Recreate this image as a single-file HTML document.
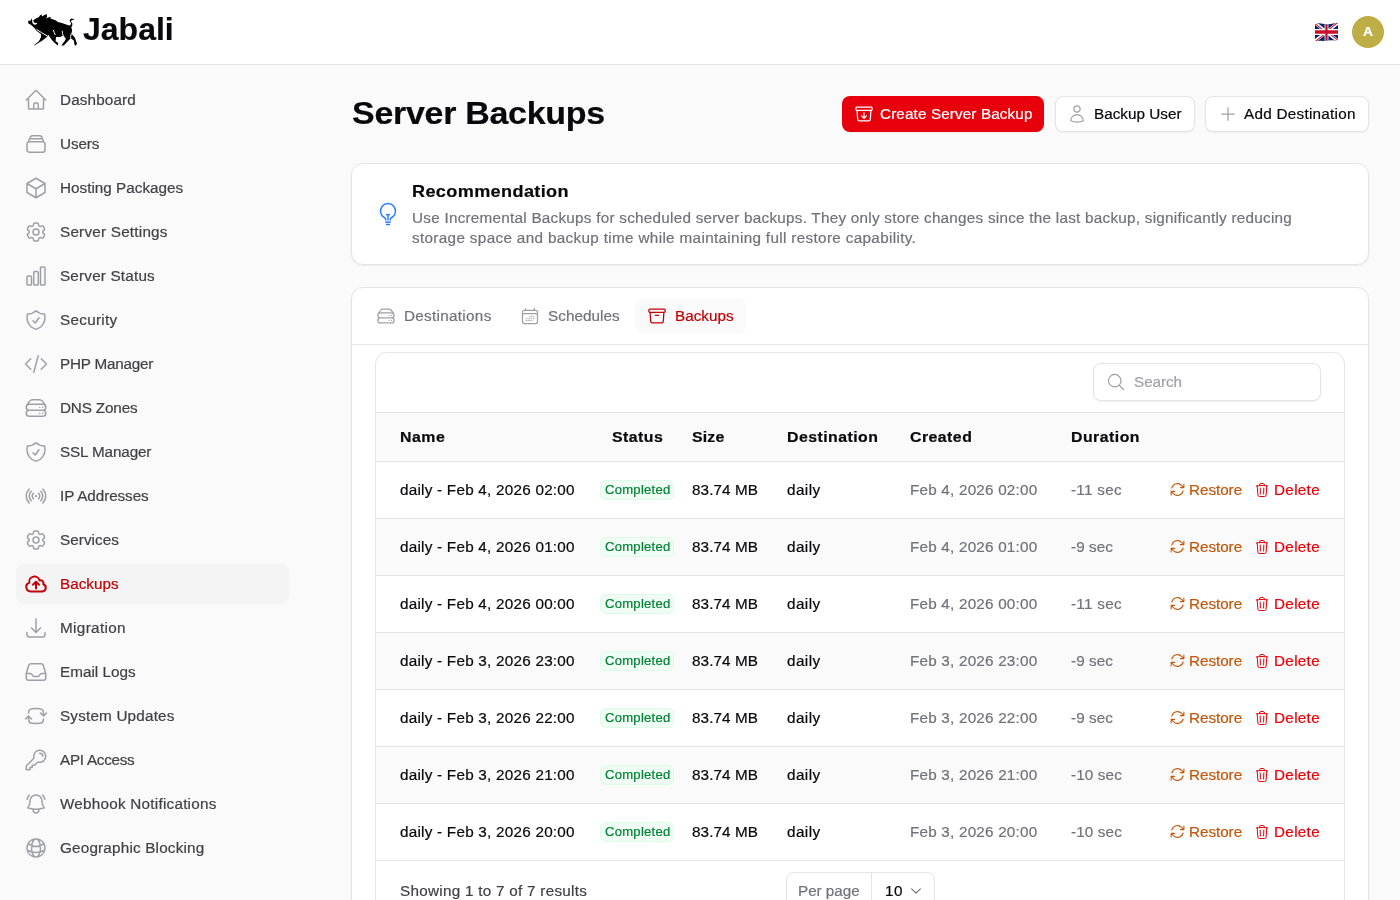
<!DOCTYPE html>
<html><head><meta charset="utf-8"><title>Server Backups</title>
<style>
html,body{margin:0;padding:0;}
body{width:1400px;height:900px;overflow:hidden;position:relative;background:#fafafa;font-family:"Liberation Sans",sans-serif;}
.t{position:absolute;white-space:nowrap;will-change:transform;transform-origin:0 0;}
svg{display:block}
</style></head><body>
<div style="position:absolute;left:0px;top:0px;width:1400px;height:64px;background:#fff;border-bottom:1px solid #e4e4e7"></div>
<svg style="position:absolute;left:24px;top:10px" width="56" height="40" viewBox="0 0 56 40"><path fill="#000" d="M4.1 11 L6.6 10.5 L7 10.3 L7.4 8 L8 10.1 L9.1 10.3 Q10.5 9.2 11.8 8.4 L15.2 6.9 L15.4 6.1 L17.4 4.2 L18.1 6.4 L19.1 5.7 L22.8 4.1 L23 6.9 L21.6 8.8 L24 7.4 L27.2 7.1 L26.2 8.4 L28.7 9.3 L32 10.6 L33.8 12.1 L37.8 13 L44.4 15.2 L45.8 15.6 L47.1 14.1 L46.8 12.6 L45.6 11.2 Q45.6 9 47.3 8.5 L50.8 9.2 L48 10.2 Q46.7 10.5 47 11.4 L48.3 13.4 L48.3 15.6 L47.3 17.3 L48.1 20.4 L47.3 24 L48.6 25 L50.8 27.6 L53 33.8 L51.7 35.7 L50.6 35 L49.8 30.4 L46.8 28.2 L45 29.9 L39.8 35.6 L37.3 35.6 L40.9 30.7 L41.9 28.4 L39.3 25.6 L36 26.9 L32 26.9 L31.6 31.3 L34 32.7 L34.2 34 L33.6 35.6 L28.2 30.4 L25.3 26.2 L24.4 24.7 L22.9 26.9 L18.4 30.4 L11.3 34.9 L9.6 35.6 L14.9 31.3 L17.1 26.9 L16.9 24 L12.4 20.7 L10.9 18.4 L6.9 14.7 L4.4 13.5 Z"/><path fill="#fff" d="M7.9 10.2 Q7.9 13.5 10.2 14.7 Q11.9 14.9 13.3 13.5 L12.3 12.8 Q10.8 13.3 9.9 12.3 Q9.3 11.3 9.4 10.2 Z"/><path fill="none" stroke="#fff" stroke-width="1" stroke-linecap="round" d="M12.8 19.6 Q17.5 22.8 23 25.8 M29.3 20.2 Q30.4 22.5 31.1 24.6 M38.2 21.2 Q38.4 24 39.1 25.4 M47.1 24 Q46.4 26.5 46.6 28"/></svg>
<div class="t" style="left:83px;top:13px;font-size:32.00px;line-height:32px;font-weight:bold;color:#09090b;letter-spacing:0.000px;transform:scaleX(1.0);-webkit-text-stroke:0.2px #09090b;">Jabali</div>
<svg style="position:absolute;left:1314px;top:22px" width="25" height="20" viewBox="0 0 25 20"><defs><clipPath id="fw"><path d="M1,2.2 Q4,1 7,1.4 T13,2.2 T19,1.6 T24,1.2 L24,18 Q21,18.6 19,18.3 T13,18.6 T7,18.8 T1,19 Z"/></clipPath><clipPath id="fc"><path d="M30,15 h30 v15 z v15 h-30 z h-30 v-15 z v-15 h30 z"/></clipPath></defs><g clip-path="url(#fw)"><svg x="1" y="1" width="23" height="18" viewBox="0 0 60 30" preserveAspectRatio="none"><path d="M0,0 v30 h60 v-30 z" fill="#012169"/><path d="M0,0 L60,30 M60,0 L0,30" stroke="#fff" stroke-width="6"/><path d="M0,0 L60,30 M60,0 L0,30" clip-path="url(#fc)" stroke="#C8102E" stroke-width="4"/><path d="M30,0 v30 M0,15 h60" stroke="#fff" stroke-width="10"/><path d="M30,0 v30 M0,15 h60" stroke="#C8102E" stroke-width="6"/></svg></g></svg>
<div style="position:absolute;left:1352px;top:16px;width:32px;height:32px;border-radius:50%;background:#bfad45"></div>
<div class="t" style="left:1363px;top:26px;font-size:12.36px;line-height:12px;font-weight:bold;color:#fff;letter-spacing:0.000px;transform:scaleX(1.12);-webkit-text-stroke:0.2px #fff;">A</div>
<svg style="position:absolute;left:24px;top:88px" width="24" height="24" viewBox="0 0 24 24" fill="none" stroke="#9f9fa9" stroke-width="1.5" stroke-linecap="round" stroke-linejoin="round"><path d="m2.25 12 8.954-8.955c.44-.439 1.152-.439 1.591 0L21.75 12M4.5 9.75v10.125c0 .621.504 1.125 1.125 1.125H9.75v-4.875c0-.621.504-1.125 1.125-1.125h2.25c.621 0 1.125.504 1.125 1.125V21h4.125c.621 0 1.125-.504 1.125-1.125V9.75M8.25 21h8.25"/></svg>
<div class="t" style="left:60px;top:93px;font-size:14.42px;line-height:14px;font-weight:normal;color:#3f3f46;letter-spacing:0.124px;transform:scaleX(1.06);-webkit-text-stroke:0.2px #3f3f46;">Dashboard</div>
<svg style="position:absolute;left:24px;top:132px" width="24" height="24" viewBox="0 0 24 24" fill="none" stroke="#9f9fa9" stroke-width="1.5" stroke-linecap="round" stroke-linejoin="round"><path d="M6 6.878V6a2.25 2.25 0 0 1 2.25-2.25h7.5A2.25 2.25 0 0 1 18 6v.878m-12 0c.235-.083.487-.128.75-.128h10.5c.263 0 .515.045.75.128m-12 0A2.25 2.25 0 0 0 4.5 9v.878m13.5-3A2.25 2.25 0 0 1 19.5 9v.878m0 0a2.246 2.246 0 0 0-.75-.128H5.25c-.263 0-.515.045-.75.128m15 0A2.25 2.25 0 0 1 21 12v6a2.25 2.25 0 0 1-2.25 2.25H5.25A2.25 2.25 0 0 1 3 18v-6c0-.98.626-1.813 1.5-2.122"/></svg>
<div class="t" style="left:60px;top:137px;font-size:14.42px;line-height:14px;font-weight:normal;color:#3f3f46;letter-spacing:-0.134px;transform:scaleX(1.06);-webkit-text-stroke:0.2px #3f3f46;">Users</div>
<svg style="position:absolute;left:24px;top:176px" width="24" height="24" viewBox="0 0 24 24" fill="none" stroke="#9f9fa9" stroke-width="1.5" stroke-linecap="round" stroke-linejoin="round"><path d="m21 7.5-9-5.25L3 7.5m18 0-9 5.25m9-5.25v9l-9 5.25M3 7.5l9 5.25M3 7.5v9l9 5.25m0-9v9"/></svg>
<div class="t" style="left:60px;top:181px;font-size:14.42px;line-height:14px;font-weight:normal;color:#3f3f46;letter-spacing:0.006px;transform:scaleX(1.06);-webkit-text-stroke:0.2px #3f3f46;">Hosting Packages</div>
<svg style="position:absolute;left:24px;top:220px" width="24" height="24" viewBox="0 0 24 24" fill="none" stroke="#9f9fa9" stroke-width="1.5" stroke-linecap="round" stroke-linejoin="round"><path d="M9.594 3.94c.09-.542.56-.94 1.11-.94h2.593c.55 0 1.02.398 1.11.94l.213 1.281c.063.374.313.686.645.87.074.04.147.083.22.127.325.196.72.257 1.075.124l1.217-.456a1.125 1.125 0 0 1 1.37.49l1.296 2.247a1.125 1.125 0 0 1-.26 1.431l-1.003.827c-.293.241-.438.613-.43.992a7.723 7.723 0 0 1 0 .255c-.008.378.137.75.43.991l1.004.827c.424.35.534.955.26 1.43l-1.298 2.247a1.125 1.125 0 0 1-1.369.491l-1.217-.456c-.355-.133-.75-.072-1.076.124a6.47 6.47 0 0 1-.22.128c-.331.183-.581.495-.644.869l-.213 1.281c-.09.543-.56.94-1.11.94h-2.594c-.55 0-1.019-.398-1.11-.94l-.213-1.281c-.062-.374-.312-.686-.644-.87a6.52 6.52 0 0 1-.22-.127c-.325-.196-.72-.257-1.076-.124l-1.217.456a1.125 1.125 0 0 1-1.369-.49l-1.297-2.247a1.125 1.125 0 0 1 .26-1.431l1.004-.827c.292-.24.437-.613.43-.991a6.932 6.932 0 0 1 0-.255c.007-.38-.138-.751-.43-.992l-1.004-.827a1.125 1.125 0 0 1-.26-1.43l1.297-2.247a1.125 1.125 0 0 1 1.37-.491l1.216.456c.356.133.751.072 1.076-.124.072-.044.146-.086.22-.128.332-.183.582-.495.644-.869l.214-1.28ZM15 12a3 3 0 1 1-6 0 3 3 0 0 1 6 0Z"/></svg>
<div class="t" style="left:60px;top:225px;font-size:14.42px;line-height:14px;font-weight:normal;color:#3f3f46;letter-spacing:0.207px;transform:scaleX(1.06);-webkit-text-stroke:0.2px #3f3f46;">Server Settings</div>
<svg style="position:absolute;left:24px;top:264px" width="24" height="24" viewBox="0 0 24 24" fill="none" stroke="#9f9fa9" stroke-width="1.5" stroke-linecap="round" stroke-linejoin="round"><path d="M3 13.125C3 12.504 3.504 12 4.125 12h2.25c.621 0 1.125.504 1.125 1.125v6.75C7.5 20.496 6.996 21 6.375 21h-2.25A1.125 1.125 0 0 1 3 19.875v-6.75ZM9.75 8.625c0-.621.504-1.125 1.125-1.125h2.25c.621 0 1.125.504 1.125 1.125v11.25c0 .621-.504 1.125-1.125 1.125h-2.25a1.125 1.125 0 0 1-1.125-1.125V8.625ZM16.5 4.125c0-.621.504-1.125 1.125-1.125h2.25C20.496 3 21 3.504 21 4.125v15.75c0 .621-.504 1.125-1.125 1.125h-2.25a1.125 1.125 0 0 1-1.125-1.125V4.125Z"/></svg>
<div class="t" style="left:60px;top:269px;font-size:14.42px;line-height:14px;font-weight:normal;color:#3f3f46;letter-spacing:0.173px;transform:scaleX(1.06);-webkit-text-stroke:0.2px #3f3f46;">Server Status</div>
<svg style="position:absolute;left:24px;top:308px" width="24" height="24" viewBox="0 0 24 24" fill="none" stroke="#9f9fa9" stroke-width="1.5" stroke-linecap="round" stroke-linejoin="round"><path d="M9 12.75 11.25 15 15 9.75m-3-7.036A11.959 11.959 0 0 1 3.598 6 11.99 11.99 0 0 0 3 9.749c0 5.592 3.824 10.29 9 11.623 5.176-1.332 9-6.03 9-11.622 0-1.31-.21-2.571-.598-3.751h-.152c-3.196 0-6.1-1.248-8.25-3.285Z"/></svg>
<div class="t" style="left:60px;top:313px;font-size:14.42px;line-height:14px;font-weight:normal;color:#3f3f46;letter-spacing:0.269px;transform:scaleX(1.06);-webkit-text-stroke:0.2px #3f3f46;">Security</div>
<svg style="position:absolute;left:24px;top:352px" width="24" height="24" viewBox="0 0 24 24" fill="none" stroke="#9f9fa9" stroke-width="1.5" stroke-linecap="round" stroke-linejoin="round"><path d="M17.25 6.75 22.5 12l-5.25 5.25m-10.5 0L1.5 12l5.25-5.25m7.5-3-4.5 16.5"/></svg>
<div class="t" style="left:60px;top:357px;font-size:14.42px;line-height:14px;font-weight:normal;color:#3f3f46;letter-spacing:-0.214px;transform:scaleX(1.06);-webkit-text-stroke:0.2px #3f3f46;">PHP Manager</div>
<svg style="position:absolute;left:24px;top:396px" width="24" height="24" viewBox="0 0 24 24" fill="none" stroke="#9f9fa9" stroke-width="1.5" stroke-linecap="round" stroke-linejoin="round"><path d="M5.25 14.25h13.5m-13.5 0a3 3 0 0 1-3-3m3 3a3 3 0 1 0 0 6h13.5a3 3 0 1 0 0-6m-16.5-3a3 3 0 0 1 3-3h13.5a3 3 0 0 1 3 3m-19.5 0a4.5 4.5 0 0 1 .9-2.7L5.737 5.1a3.375 3.375 0 0 1 2.7-1.35h7.126c1.062 0 2.062.5 2.7 1.35l2.587 3.45a4.5 4.5 0 0 1 .9 2.7m0 0a3 3 0 0 1-3 3m0 3h.008v.008h-.008v-.008Zm0-6h.008v.008h-.008v-.008Zm-3 6h.008v.008h-.008v-.008Zm0-6h.008v.008h-.008v-.008Z"/></svg>
<div class="t" style="left:60px;top:401px;font-size:14.42px;line-height:14px;font-weight:normal;color:#3f3f46;letter-spacing:-0.154px;transform:scaleX(1.06);-webkit-text-stroke:0.2px #3f3f46;">DNS Zones</div>
<svg style="position:absolute;left:24px;top:440px" width="24" height="24" viewBox="0 0 24 24" fill="none" stroke="#9f9fa9" stroke-width="1.5" stroke-linecap="round" stroke-linejoin="round"><path d="M9 12.75 11.25 15 15 9.75m-3-7.036A11.959 11.959 0 0 1 3.598 6 11.99 11.99 0 0 0 3 9.749c0 5.592 3.824 10.29 9 11.623 5.176-1.332 9-6.03 9-11.622 0-1.31-.21-2.571-.598-3.751h-.152c-3.196 0-6.1-1.248-8.25-3.285Z"/></svg>
<div class="t" style="left:60px;top:445px;font-size:14.42px;line-height:14px;font-weight:normal;color:#3f3f46;letter-spacing:-0.129px;transform:scaleX(1.06);-webkit-text-stroke:0.2px #3f3f46;">SSL Manager</div>
<svg style="position:absolute;left:24px;top:484px" width="24" height="24" viewBox="0 0 24 24" fill="none" stroke="#9f9fa9" stroke-width="1.5" stroke-linecap="round" stroke-linejoin="round"><path d="M9.348 14.652a3.75 3.75 0 0 1 0-5.304m5.304 0a3.75 3.75 0 0 1 0 5.304m-7.425 2.121a6.75 6.75 0 0 1 0-9.546m9.546 0a6.75 6.75 0 0 1 0 9.546M5.106 18.894c-3.808-3.807-3.808-9.98 0-13.788m13.788 0c3.808 3.807 3.808 9.98 0 13.788M12 12h.008v.008H12V12Zm.375 0a.375.375 0 1 1-.75 0 .375.375 0 0 1 .75 0Z"/></svg>
<div class="t" style="left:60px;top:489px;font-size:14.42px;line-height:14px;font-weight:normal;color:#3f3f46;letter-spacing:-0.086px;transform:scaleX(1.06);-webkit-text-stroke:0.2px #3f3f46;">IP Addresses</div>
<svg style="position:absolute;left:24px;top:528px" width="24" height="24" viewBox="0 0 24 24" fill="none" stroke="#9f9fa9" stroke-width="1.5" stroke-linecap="round" stroke-linejoin="round"><path d="M9.594 3.94c.09-.542.56-.94 1.11-.94h2.593c.55 0 1.02.398 1.11.94l.213 1.281c.063.374.313.686.645.87.074.04.147.083.22.127.325.196.72.257 1.075.124l1.217-.456a1.125 1.125 0 0 1 1.37.49l1.296 2.247a1.125 1.125 0 0 1-.26 1.431l-1.003.827c-.293.241-.438.613-.43.992a7.723 7.723 0 0 1 0 .255c-.008.378.137.75.43.991l1.004.827c.424.35.534.955.26 1.43l-1.298 2.247a1.125 1.125 0 0 1-1.369.491l-1.217-.456c-.355-.133-.75-.072-1.076.124a6.47 6.47 0 0 1-.22.128c-.331.183-.581.495-.644.869l-.213 1.281c-.09.543-.56.94-1.11.94h-2.594c-.55 0-1.019-.398-1.11-.94l-.213-1.281c-.062-.374-.312-.686-.644-.87a6.52 6.52 0 0 1-.22-.127c-.325-.196-.72-.257-1.076-.124l-1.217.456a1.125 1.125 0 0 1-1.369-.49l-1.297-2.247a1.125 1.125 0 0 1 .26-1.431l1.004-.827c.292-.24.437-.613.43-.991a6.932 6.932 0 0 1 0-.255c.007-.38-.138-.751-.43-.992l-1.004-.827a1.125 1.125 0 0 1-.26-1.43l1.297-2.247a1.125 1.125 0 0 1 1.37-.491l1.216.456c.356.133.751.072 1.076-.124.072-.044.146-.086.22-.128.332-.183.582-.495.644-.869l.214-1.28ZM15 12a3 3 0 1 1-6 0 3 3 0 0 1 6 0Z"/></svg>
<div class="t" style="left:60px;top:533px;font-size:14.42px;line-height:14px;font-weight:normal;color:#3f3f46;letter-spacing:0.051px;transform:scaleX(1.06);-webkit-text-stroke:0.2px #3f3f46;">Services</div>
<div style="position:absolute;left:16px;top:564px;width:273px;height:40px;background:#f4f4f5;border-radius:8px"></div>
<svg style="position:absolute;left:24px;top:572px" width="24" height="24" viewBox="0 0 24 24" fill="none" stroke="#c10007" stroke-width="2" stroke-linecap="round" stroke-linejoin="round"><path d="M12 16.5V9.75m0 0 3 3m-3-3-3 3M6.75 19.5a4.5 4.5 0 0 1-1.41-8.775 5.25 5.25 0 0 1 10.233-2.33 3 3 0 0 1 3.758 3.848A3.752 3.752 0 0 1 18 19.5H6.75Z"/></svg>
<div class="t" style="left:60px;top:577px;font-size:14.42px;line-height:14px;font-weight:normal;color:#c10007;letter-spacing:-0.002px;transform:scaleX(1.06);-webkit-text-stroke:0.2px #c10007;">Backups</div>
<svg style="position:absolute;left:24px;top:616px" width="24" height="24" viewBox="0 0 24 24" fill="none" stroke="#9f9fa9" stroke-width="1.5" stroke-linecap="round" stroke-linejoin="round"><path d="M3 16.5v2.25A2.25 2.25 0 0 0 5.25 21h13.5A2.25 2.25 0 0 0 21 18.75V16.5M16.5 12 12 16.5m0 0L7.5 12m4.5 4.5V3"/></svg>
<div class="t" style="left:60px;top:621px;font-size:14.42px;line-height:14px;font-weight:normal;color:#3f3f46;letter-spacing:0.330px;transform:scaleX(1.06);-webkit-text-stroke:0.2px #3f3f46;">Migration</div>
<svg style="position:absolute;left:24px;top:660px" width="24" height="24" viewBox="0 0 24 24" fill="none" stroke="#9f9fa9" stroke-width="1.5" stroke-linecap="round" stroke-linejoin="round"><path d="M2.25 13.5h3.86a2.25 2.25 0 0 1 2.012 1.244l.256.512a2.25 2.25 0 0 0 2.013 1.244h3.218a2.25 2.25 0 0 0 2.013-1.244l.256-.512a2.25 2.25 0 0 1 2.013-1.244h3.859m-19.5.338V18a2.25 2.25 0 0 0 2.25 2.25h15A2.25 2.25 0 0 0 21.75 18v-4.162c0-.224-.034-.447-.1-.661L19.24 5.338a2.25 2.25 0 0 0-2.15-1.588H6.911a2.25 2.25 0 0 0-2.15 1.588L2.35 13.177a2.25 2.25 0 0 0-.1.661Z"/></svg>
<div class="t" style="left:60px;top:665px;font-size:14.42px;line-height:14px;font-weight:normal;color:#3f3f46;letter-spacing:-0.001px;transform:scaleX(1.06);-webkit-text-stroke:0.2px #3f3f46;">Email Logs</div>
<svg style="position:absolute;left:24px;top:704px" width="24" height="24" viewBox="0 0 24 24" fill="none" stroke="#9f9fa9" stroke-width="1.5" stroke-linecap="round" stroke-linejoin="round"><path d="M19.5 12c0-1.232-.046-2.453-.138-3.662a4.006 4.006 0 0 0-3.7-3.7 48.678 48.678 0 0 0-7.324 0 4.006 4.006 0 0 0-3.7 3.7c-.017.22-.032.441-.046.662M19.5 12l3-3m-3 3-3-3m-12 3c0 1.232.046 2.453.138 3.662a4.006 4.006 0 0 0 3.7 3.7 48.656 48.656 0 0 0 7.324 0 4.006 4.006 0 0 0 3.7-3.7c.017-.22.032-.441.046-.662M4.5 12l3 3m-3-3-3 3"/></svg>
<div class="t" style="left:60px;top:709px;font-size:14.42px;line-height:14px;font-weight:normal;color:#3f3f46;letter-spacing:0.170px;transform:scaleX(1.06);-webkit-text-stroke:0.2px #3f3f46;">System Updates</div>
<svg style="position:absolute;left:24px;top:748px" width="24" height="24" viewBox="0 0 24 24" fill="none" stroke="#9f9fa9" stroke-width="1.5" stroke-linecap="round" stroke-linejoin="round"><path d="M15.75 5.25a3 3 0 0 1 3 3m3 0a6 6 0 0 1-7.029 5.912c-.563-.097-1.159.026-1.563.43L10.5 17.25H8.25v2.25H6v2.25H2.25v-2.818c0-.597.237-1.17.659-1.591l6.499-6.499c.404-.404.527-1 .43-1.563A6 6 0 1 1 21.75 8.25Z"/></svg>
<div class="t" style="left:60px;top:753px;font-size:14.42px;line-height:14px;font-weight:normal;color:#3f3f46;letter-spacing:-0.262px;transform:scaleX(1.06);-webkit-text-stroke:0.2px #3f3f46;">API Access</div>
<svg style="position:absolute;left:24px;top:792px" width="24" height="24" viewBox="0 0 24 24" fill="none" stroke="#9f9fa9" stroke-width="1.5" stroke-linecap="round" stroke-linejoin="round"><path d="M14.857 17.082a23.848 23.848 0 0 0 5.454-1.31A8.967 8.967 0 0 1 18 9.75V9A6 6 0 0 0 6 9v.75a8.967 8.967 0 0 1-2.312 6.022c1.733.64 3.56 1.085 5.455 1.31m5.714 0a24.255 24.255 0 0 1-5.714 0m5.714 0a3 3 0 1 1-5.714 0M3.124 7.5A8.969 8.969 0 0 1 5.292 3m13.416 0a8.969 8.969 0 0 1 2.168 4.5"/></svg>
<div class="t" style="left:60px;top:797px;font-size:14.42px;line-height:14px;font-weight:normal;color:#3f3f46;letter-spacing:0.221px;transform:scaleX(1.06);-webkit-text-stroke:0.2px #3f3f46;">Webhook Notifications</div>
<svg style="position:absolute;left:24px;top:836px" width="24" height="24" viewBox="0 0 24 24" fill="none" stroke="#9f9fa9" stroke-width="1.5" stroke-linecap="round" stroke-linejoin="round"><path d="M12 21a9.004 9.004 0 0 0 8.716-6.747M12 21a9.004 9.004 0 0 1-8.716-6.747M12 21c2.485 0 4.5-4.03 4.5-9S14.485 3 12 3m0 18c-2.485 0-4.5-4.03-4.5-9S9.515 3 12 3m0 0a8.997 8.997 0 0 1 7.843 4.582M12 3a8.997 8.997 0 0 0-7.843 4.582m15.686 0A11.953 11.953 0 0 1 12 10.5c-2.998 0-5.740-1.1-7.843-2.918m15.686 0A8.959 8.959 0 0 1 21 12c0 .778-.099 1.533-.284 2.253m0 0A17.919 17.919 0 0 1 12 16.5c-3.162 0-6.133-.815-8.716-2.247m0 0A9.015 9.015 0 0 1 3 12c0-1.605.42-3.113 1.157-4.418"/></svg>
<div class="t" style="left:60px;top:841px;font-size:14.42px;line-height:14px;font-weight:normal;color:#3f3f46;letter-spacing:0.175px;transform:scaleX(1.06);-webkit-text-stroke:0.2px #3f3f46;">Geographic Blocking</div>
<div class="t" style="left:352px;top:99px;font-size:30.90px;line-height:30px;font-weight:bold;color:#09090b;letter-spacing:-0.262px;transform:scaleX(1.1);-webkit-text-stroke:0.2px #09090b;">Server Backups</div>
<div style="position:absolute;left:842px;top:96px;width:202px;height:36px;background:#e7000b;border-radius:8px;box-shadow:0 1px 2px rgba(0,0,0,.05)"></div>
<svg style="position:absolute;left:854px;top:104px" width="20" height="20" viewBox="0 0 24 24" fill="none" stroke="#fff" stroke-width="1.5" stroke-linecap="round" stroke-linejoin="round"><path d="m20.25 7.5-.625 10.632a2.25 2.25 0 0 1-2.247 2.118H6.622a2.25 2.25 0 0 1-2.247-2.118L3.75 7.5m8.25 3v6.75m0 0-3-3m3 3 3-3M3.375 7.5h17.25c.621 0 1.125-.504 1.125-1.125v-1.5c0-.621-.504-1.125-1.125-1.125H3.375c-.621 0-1.125.504-1.125 1.125v1.5c0 .621.504 1.125 1.125 1.125Z"/></svg>
<div class="t" style="left:880px;top:107px;font-size:14.42px;line-height:14px;font-weight:normal;color:#fff;letter-spacing:0.108px;transform:scaleX(1.06);-webkit-text-stroke:0.2px #fff;">Create Server Backup</div>
<div style="position:absolute;left:1055px;top:96px;width:140px;height:36px;box-sizing:border-box;background:#fff;border:1px solid #e4e4e7;border-radius:8px;box-shadow:0 1px 2px rgba(0,0,0,.05)"></div>
<svg style="position:absolute;left:1067px;top:104px" width="20" height="20" viewBox="0 0 24 24" fill="none" stroke="#9f9fa9" stroke-width="1.5" stroke-linecap="round" stroke-linejoin="round"><path d="M15.75 6a3.75 3.75 0 1 1-7.5 0 3.75 3.75 0 0 1 7.5 0ZM4.501 20.118a7.5 7.5 0 0 1 14.998 0A17.933 17.933 0 0 1 12 21.75c-2.676 0-5.216-.584-7.499-1.632Z"/></svg>
<div class="t" style="left:1094px;top:107px;font-size:14.42px;line-height:14px;font-weight:normal;color:#09090b;letter-spacing:0.015px;transform:scaleX(1.06);-webkit-text-stroke:0.2px #09090b;">Backup User</div>
<div style="position:absolute;left:1205px;top:96px;width:164px;height:36px;box-sizing:border-box;background:#fff;border:1px solid #e4e4e7;border-radius:8px;box-shadow:0 1px 2px rgba(0,0,0,.05)"></div>
<svg style="position:absolute;left:1218px;top:104px" width="20" height="20" viewBox="0 0 24 24" fill="none" stroke="#9f9fa9" stroke-width="1.5" stroke-linecap="round" stroke-linejoin="round"><path d="M12 4.5v15m7.5-7.5h-15"/></svg>
<div class="t" style="left:1244px;top:107px;font-size:14.42px;line-height:14px;font-weight:normal;color:#09090b;letter-spacing:0.250px;transform:scaleX(1.06);-webkit-text-stroke:0.2px #09090b;">Add Destination</div>
<div style="position:absolute;left:351px;top:163px;width:1018px;height:102px;box-sizing:border-box;background:#fff;border:1px solid #e4e4e7;border-radius:12px;box-shadow:0 1px 2px rgba(0,0,0,.06)"></div>
<svg style="position:absolute;left:376px;top:202px" width="24" height="24" viewBox="0 0 24 24" fill="none" stroke="#2b7fff" stroke-width="1.5" stroke-linecap="round" stroke-linejoin="round"><path d="M12 18v-5.25m0 0a6.01 6.01 0 0 0 1.5-.189m-1.5.189a6.01 6.01 0 0 1-1.5-.189m3.75 7.478a12.06 12.06 0 0 1-4.5 0m3.75 2.383a14.406 14.406 0 0 1-3 0M14.250 18v-.192c0-.983.658-1.823 1.508-2.316a7.5 7.5 0 1 0-7.517 0c.85.493 1.509 1.333 1.509 2.316V18"/></svg>
<div class="t" style="left:412px;top:183px;font-size:16.48px;line-height:16px;font-weight:bold;color:#09090b;letter-spacing:0.319px;transform:scaleX(1.1);-webkit-text-stroke:0.2px #09090b;">Recommendation</div>
<div class="t" style="left:412px;top:211px;font-size:14.42px;line-height:14px;font-weight:normal;color:#71717b;letter-spacing:0.235px;transform:scaleX(1.06);-webkit-text-stroke:0.2px #71717b;">Use Incremental Backups for scheduled server backups. They only store changes since the last backup, significantly reducing</div>
<div class="t" style="left:412px;top:231px;font-size:14.42px;line-height:14px;font-weight:normal;color:#71717b;letter-spacing:0.315px;transform:scaleX(1.06);-webkit-text-stroke:0.2px #71717b;">storage space and backup time while maintaining full restore capability.</div>
<div style="position:absolute;left:351px;top:287px;width:1018px;height:700px;box-sizing:border-box;background:#fff;border:1px solid #e4e4e7;border-radius:12px;box-shadow:0 1px 2px rgba(0,0,0,.06)"></div>
<div style="position:absolute;left:352px;top:344px;width:1016px;height:1px;background:#e4e4e7"></div>
<svg style="position:absolute;left:376px;top:306px" width="20" height="20" viewBox="0 0 24 24" fill="none" stroke="#9f9fa9" stroke-width="1.5" stroke-linecap="round" stroke-linejoin="round"><path d="M5.25 14.25h13.5m-13.5 0a3 3 0 0 1-3-3m3 3a3 3 0 1 0 0 6h13.5a3 3 0 1 0 0-6m-16.5-3a3 3 0 0 1 3-3h13.5a3 3 0 0 1 3 3m-19.5 0a4.5 4.5 0 0 1 .9-2.7L5.737 5.1a3.375 3.375 0 0 1 2.7-1.35h7.126c1.062 0 2.062.5 2.7 1.35l2.587 3.45a4.5 4.5 0 0 1 .9 2.7m0 0a3 3 0 0 1-3 3m0 3h.008v.008h-.008v-.008Zm0-6h.008v.008h-.008v-.008Zm-3 6h.008v.008h-.008v-.008Zm0-6h.008v.008h-.008v-.008Z"/></svg>
<div class="t" style="left:404px;top:309px;font-size:14.42px;line-height:14px;font-weight:normal;color:#71717b;letter-spacing:0.277px;transform:scaleX(1.06);-webkit-text-stroke:0.2px #71717b;">Destinations</div>
<svg style="position:absolute;left:520px;top:306px" width="20" height="20" viewBox="0 0 24 24" fill="none" stroke="#9f9fa9" stroke-width="1.5" stroke-linecap="round" stroke-linejoin="round"><path d="M6.75 3v2.25M17.25 3v2.25M3 18.75V7.5a2.25 2.25 0 0 1 2.25-2.25h13.5A2.25 2.25 0 0 1 21 7.5v11.25m-18 0A2.25 2.25 0 0 0 5.25 21h13.5A2.25 2.25 0 0 0 21 18.75m-18 0v-7.5A2.25 2.25 0 0 1 5.25 9h13.5A2.25 2.25 0 0 1 21 11.25v7.5m-9-6h.008v.008H12v-.008ZM12 15h.008v.008H12V15Zm0 2.25h.008v.008H12v-.008ZM9.75 15h.008v.008H9.75V15Zm0 2.25h.008v.008H9.75v-.008ZM7.5 15h.008v.008H7.5V15Zm0 2.25h.008v.008H7.5v-.008Zm6.75-4.5h.008v.008h-.008v-.008Zm0 2.25h.008v.008h-.008V15Zm0 2.25h.008v.008h-.008v-.008Zm2.25-4.5h.008v.008H16.5v-.008Zm0 2.25h.008v.008H16.5V15Z"/></svg>
<div class="t" style="left:548px;top:309px;font-size:14.42px;line-height:14px;font-weight:normal;color:#71717b;letter-spacing:0.026px;transform:scaleX(1.06);-webkit-text-stroke:0.2px #71717b;">Schedules</div>
<div style="position:absolute;left:635px;top:298px;width:111px;height:36px;background:#fafafa;border-radius:8px"></div>
<svg style="position:absolute;left:647px;top:306px" width="20" height="20" viewBox="0 0 24 24" fill="none" stroke="#c10007" stroke-width="1.5" stroke-linecap="round" stroke-linejoin="round"><path d="m20.25 7.5-.625 10.632a2.25 2.25 0 0 1-2.247 2.118H6.622a2.25 2.25 0 0 1-2.247-2.118L3.75 7.5M10 11.25h4M3.375 7.5h17.25c.621 0 1.125-.504 1.125-1.125v-1.5c0-.621-.504-1.125-1.125-1.125H3.375c-.621 0-1.125.504-1.125 1.125v1.5c0 .621.504 1.125 1.125 1.125Z"/></svg>
<div class="t" style="left:675px;top:309px;font-size:14.42px;line-height:14px;font-weight:normal;color:#c10007;letter-spacing:-0.002px;transform:scaleX(1.06);-webkit-text-stroke:0.2px #c10007;">Backups</div>
<div style="position:absolute;left:375px;top:352px;width:970px;height:700px;box-sizing:border-box;background:#fff;border:1px solid #e4e4e7;border-radius:12px"></div>
<div style="position:absolute;left:1093px;top:363px;width:228px;height:38px;box-sizing:border-box;background:#fff;border:1px solid #e4e4e7;border-radius:8px;box-shadow:0 1px 2px rgba(0,0,0,.05)"></div>
<svg style="position:absolute;left:1106px;top:372px" width="20" height="20" viewBox="0 0 24 24" fill="none" stroke="#9f9fa9" stroke-width="1.5" stroke-linecap="round" stroke-linejoin="round"><path d="m21 21-5.197-5.197m0 0A7.5 7.5 0 1 0 5.196 5.196a7.5 7.5 0 0 0 10.607 10.607Z"/></svg>
<div class="t" style="left:1134px;top:375px;font-size:14.42px;line-height:14px;font-weight:normal;color:#9f9fa9;letter-spacing:-0.052px;transform:scaleX(1.06);-webkit-text-stroke:0.2px #9f9fa9;">Search</div>
<div style="position:absolute;left:376px;top:412px;width:968px;height:50px;box-sizing:border-box;background:#fafafa;border-top:1px solid #e4e4e7;border-bottom:1px solid #e4e4e7"></div>
<div class="t" style="left:400px;top:430px;font-size:14.42px;line-height:14px;font-weight:bold;color:#09090b;letter-spacing:0.465px;transform:scaleX(1.1);-webkit-text-stroke:0.2px #09090b;">Name</div>
<div class="t" style="left:612px;top:430px;font-size:14.42px;line-height:14px;font-weight:bold;color:#09090b;letter-spacing:0.415px;transform:scaleX(1.1);-webkit-text-stroke:0.2px #09090b;">Status</div>
<div class="t" style="left:692px;top:430px;font-size:14.42px;line-height:14px;font-weight:bold;color:#09090b;letter-spacing:0.179px;transform:scaleX(1.1);-webkit-text-stroke:0.2px #09090b;">Size</div>
<div class="t" style="left:787px;top:430px;font-size:14.42px;line-height:14px;font-weight:bold;color:#09090b;letter-spacing:0.419px;transform:scaleX(1.1);-webkit-text-stroke:0.2px #09090b;">Destination</div>
<div class="t" style="left:910px;top:430px;font-size:14.42px;line-height:14px;font-weight:bold;color:#09090b;letter-spacing:0.425px;transform:scaleX(1.1);-webkit-text-stroke:0.2px #09090b;">Created</div>
<div class="t" style="left:1071px;top:430px;font-size:14.42px;line-height:14px;font-weight:bold;color:#09090b;letter-spacing:0.433px;transform:scaleX(1.1);-webkit-text-stroke:0.2px #09090b;">Duration</div>
<div style="position:absolute;left:376px;top:462px;width:968px;height:57px;box-sizing:border-box;background:#fff;border-bottom:1px solid #e4e4e7"></div>
<div class="t" style="left:400px;top:483px;font-size:14.42px;line-height:14px;font-weight:normal;color:#09090b;letter-spacing:0.221px;transform:scaleX(1.06);-webkit-text-stroke:0.2px #09090b;">daily - Feb 4, 2026 02:00</div>
<div style="position:absolute;left:600px;top:480px;width:74px;height:20px;box-sizing:border-box;background:#f0fdf4;border:1px solid #dcfce7;border-radius:6px"></div>
<div class="t" style="left:605px;top:484px;font-size:12.36px;line-height:12px;font-weight:normal;color:#008236;letter-spacing:0.220px;transform:scaleX(1.06);-webkit-text-stroke:0.2px #008236;">Completed</div>
<div class="t" style="left:692px;top:483px;font-size:14.42px;line-height:14px;font-weight:normal;color:#09090b;letter-spacing:0.093px;transform:scaleX(1.06);-webkit-text-stroke:0.2px #09090b;">83.74 MB</div>
<div class="t" style="left:787px;top:483px;font-size:14.42px;line-height:14px;font-weight:normal;color:#09090b;letter-spacing:0.396px;transform:scaleX(1.06);-webkit-text-stroke:0.2px #09090b;">daily</div>
<div class="t" style="left:910px;top:483px;font-size:14.42px;line-height:14px;font-weight:normal;color:#71717b;letter-spacing:0.189px;transform:scaleX(1.06);-webkit-text-stroke:0.2px #71717b;">Feb 4, 2026 02:00</div>
<div class="t" style="left:1071px;top:483px;font-size:14.42px;line-height:14px;font-weight:normal;color:#71717b;letter-spacing:0.261px;transform:scaleX(1.06);-webkit-text-stroke:0.2px #71717b;">-11 sec</div>
<svg style="position:absolute;left:1168.5px;top:481px" width="17" height="17" viewBox="0 0 24 24" fill="none" stroke="#c2570c" stroke-width="1.5" stroke-linecap="round" stroke-linejoin="round"><path d="M16.023 9.348h4.992v-.001M2.985 19.644v-4.992m0 0h4.992m-4.993 0 3.181 3.183a8.25 8.25 0 0 0 13.803-3.7M4.031 9.865a8.25 8.25 0 0 1 13.803-3.7l3.181 3.182m0-4.991v4.99"/></svg>
<div class="t" style="left:1189px;top:483px;font-size:14.42px;line-height:14px;font-weight:normal;color:#c2570c;letter-spacing:-0.053px;transform:scaleX(1.06);-webkit-text-stroke:0.2px #c2570c;">Restore</div>
<svg style="position:absolute;left:1253.5px;top:482px" width="16" height="16" viewBox="0 0 24 24" fill="none" stroke="#e7000b" stroke-width="1.5" stroke-linecap="round" stroke-linejoin="round"><path d="m14.74 9-.346 9m-4.788 0L9.26 9m9.968-3.21c.342.052.682.107 1.022.166m-1.022-.165L18.16 19.673a2.25 2.25 0 0 1-2.244 2.077H8.084a2.25 2.25 0 0 1-2.244-2.077L4.772 5.79m14.456 0a48.108 48.108 0 0 0-3.478-.397m-12 .562c.34-.059.68-.114 1.022-.165m0 0a48.11 48.11 0 0 1 3.478-.397m7.5 0v-.916c0-1.18-.91-2.164-2.09-2.201a51.964 51.964 0 0 0-3.32 0c-1.18.037-2.09 1.022-2.09 2.201v.916m7.5 0a48.667 48.667 0 0 0-7.5 0"/></svg>
<div class="t" style="left:1274px;top:483px;font-size:14.42px;line-height:14px;font-weight:normal;color:#e7000b;letter-spacing:0.286px;transform:scaleX(1.06);-webkit-text-stroke:0.2px #e7000b;">Delete</div>
<div style="position:absolute;left:376px;top:519px;width:968px;height:57px;box-sizing:border-box;background:#fafafa;border-bottom:1px solid #e4e4e7"></div>
<div class="t" style="left:400px;top:540px;font-size:14.42px;line-height:14px;font-weight:normal;color:#09090b;letter-spacing:0.221px;transform:scaleX(1.06);-webkit-text-stroke:0.2px #09090b;">daily - Feb 4, 2026 01:00</div>
<div style="position:absolute;left:600px;top:537px;width:74px;height:20px;box-sizing:border-box;background:#f0fdf4;border:1px solid #dcfce7;border-radius:6px"></div>
<div class="t" style="left:605px;top:541px;font-size:12.36px;line-height:12px;font-weight:normal;color:#008236;letter-spacing:0.220px;transform:scaleX(1.06);-webkit-text-stroke:0.2px #008236;">Completed</div>
<div class="t" style="left:692px;top:540px;font-size:14.42px;line-height:14px;font-weight:normal;color:#09090b;letter-spacing:0.093px;transform:scaleX(1.06);-webkit-text-stroke:0.2px #09090b;">83.74 MB</div>
<div class="t" style="left:787px;top:540px;font-size:14.42px;line-height:14px;font-weight:normal;color:#09090b;letter-spacing:0.396px;transform:scaleX(1.06);-webkit-text-stroke:0.2px #09090b;">daily</div>
<div class="t" style="left:910px;top:540px;font-size:14.42px;line-height:14px;font-weight:normal;color:#71717b;letter-spacing:0.189px;transform:scaleX(1.06);-webkit-text-stroke:0.2px #71717b;">Feb 4, 2026 01:00</div>
<div class="t" style="left:1071px;top:540px;font-size:14.42px;line-height:14px;font-weight:normal;color:#71717b;letter-spacing:0.062px;transform:scaleX(1.06);-webkit-text-stroke:0.2px #71717b;">-9 sec</div>
<svg style="position:absolute;left:1168.5px;top:538px" width="17" height="17" viewBox="0 0 24 24" fill="none" stroke="#c2570c" stroke-width="1.5" stroke-linecap="round" stroke-linejoin="round"><path d="M16.023 9.348h4.992v-.001M2.985 19.644v-4.992m0 0h4.992m-4.993 0 3.181 3.183a8.25 8.25 0 0 0 13.803-3.7M4.031 9.865a8.25 8.25 0 0 1 13.803-3.7l3.181 3.182m0-4.991v4.99"/></svg>
<div class="t" style="left:1189px;top:540px;font-size:14.42px;line-height:14px;font-weight:normal;color:#c2570c;letter-spacing:-0.053px;transform:scaleX(1.06);-webkit-text-stroke:0.2px #c2570c;">Restore</div>
<svg style="position:absolute;left:1253.5px;top:539px" width="16" height="16" viewBox="0 0 24 24" fill="none" stroke="#e7000b" stroke-width="1.5" stroke-linecap="round" stroke-linejoin="round"><path d="m14.74 9-.346 9m-4.788 0L9.26 9m9.968-3.21c.342.052.682.107 1.022.166m-1.022-.165L18.16 19.673a2.25 2.25 0 0 1-2.244 2.077H8.084a2.25 2.25 0 0 1-2.244-2.077L4.772 5.79m14.456 0a48.108 48.108 0 0 0-3.478-.397m-12 .562c.34-.059.68-.114 1.022-.165m0 0a48.11 48.11 0 0 1 3.478-.397m7.5 0v-.916c0-1.18-.91-2.164-2.09-2.201a51.964 51.964 0 0 0-3.32 0c-1.18.037-2.09 1.022-2.09 2.201v.916m7.5 0a48.667 48.667 0 0 0-7.5 0"/></svg>
<div class="t" style="left:1274px;top:540px;font-size:14.42px;line-height:14px;font-weight:normal;color:#e7000b;letter-spacing:0.286px;transform:scaleX(1.06);-webkit-text-stroke:0.2px #e7000b;">Delete</div>
<div style="position:absolute;left:376px;top:576px;width:968px;height:57px;box-sizing:border-box;background:#fff;border-bottom:1px solid #e4e4e7"></div>
<div class="t" style="left:400px;top:597px;font-size:14.42px;line-height:14px;font-weight:normal;color:#09090b;letter-spacing:0.221px;transform:scaleX(1.06);-webkit-text-stroke:0.2px #09090b;">daily - Feb 4, 2026 00:00</div>
<div style="position:absolute;left:600px;top:594px;width:74px;height:20px;box-sizing:border-box;background:#f0fdf4;border:1px solid #dcfce7;border-radius:6px"></div>
<div class="t" style="left:605px;top:598px;font-size:12.36px;line-height:12px;font-weight:normal;color:#008236;letter-spacing:0.220px;transform:scaleX(1.06);-webkit-text-stroke:0.2px #008236;">Completed</div>
<div class="t" style="left:692px;top:597px;font-size:14.42px;line-height:14px;font-weight:normal;color:#09090b;letter-spacing:0.093px;transform:scaleX(1.06);-webkit-text-stroke:0.2px #09090b;">83.74 MB</div>
<div class="t" style="left:787px;top:597px;font-size:14.42px;line-height:14px;font-weight:normal;color:#09090b;letter-spacing:0.396px;transform:scaleX(1.06);-webkit-text-stroke:0.2px #09090b;">daily</div>
<div class="t" style="left:910px;top:597px;font-size:14.42px;line-height:14px;font-weight:normal;color:#71717b;letter-spacing:0.189px;transform:scaleX(1.06);-webkit-text-stroke:0.2px #71717b;">Feb 4, 2026 00:00</div>
<div class="t" style="left:1071px;top:597px;font-size:14.42px;line-height:14px;font-weight:normal;color:#71717b;letter-spacing:0.261px;transform:scaleX(1.06);-webkit-text-stroke:0.2px #71717b;">-11 sec</div>
<svg style="position:absolute;left:1168.5px;top:595px" width="17" height="17" viewBox="0 0 24 24" fill="none" stroke="#c2570c" stroke-width="1.5" stroke-linecap="round" stroke-linejoin="round"><path d="M16.023 9.348h4.992v-.001M2.985 19.644v-4.992m0 0h4.992m-4.993 0 3.181 3.183a8.25 8.25 0 0 0 13.803-3.7M4.031 9.865a8.25 8.25 0 0 1 13.803-3.7l3.181 3.182m0-4.991v4.99"/></svg>
<div class="t" style="left:1189px;top:597px;font-size:14.42px;line-height:14px;font-weight:normal;color:#c2570c;letter-spacing:-0.053px;transform:scaleX(1.06);-webkit-text-stroke:0.2px #c2570c;">Restore</div>
<svg style="position:absolute;left:1253.5px;top:596px" width="16" height="16" viewBox="0 0 24 24" fill="none" stroke="#e7000b" stroke-width="1.5" stroke-linecap="round" stroke-linejoin="round"><path d="m14.74 9-.346 9m-4.788 0L9.26 9m9.968-3.21c.342.052.682.107 1.022.166m-1.022-.165L18.16 19.673a2.25 2.25 0 0 1-2.244 2.077H8.084a2.25 2.25 0 0 1-2.244-2.077L4.772 5.79m14.456 0a48.108 48.108 0 0 0-3.478-.397m-12 .562c.34-.059.68-.114 1.022-.165m0 0a48.11 48.11 0 0 1 3.478-.397m7.5 0v-.916c0-1.18-.91-2.164-2.09-2.201a51.964 51.964 0 0 0-3.32 0c-1.18.037-2.09 1.022-2.09 2.201v.916m7.5 0a48.667 48.667 0 0 0-7.5 0"/></svg>
<div class="t" style="left:1274px;top:597px;font-size:14.42px;line-height:14px;font-weight:normal;color:#e7000b;letter-spacing:0.286px;transform:scaleX(1.06);-webkit-text-stroke:0.2px #e7000b;">Delete</div>
<div style="position:absolute;left:376px;top:633px;width:968px;height:57px;box-sizing:border-box;background:#fafafa;border-bottom:1px solid #e4e4e7"></div>
<div class="t" style="left:400px;top:654px;font-size:14.42px;line-height:14px;font-weight:normal;color:#09090b;letter-spacing:0.221px;transform:scaleX(1.06);-webkit-text-stroke:0.2px #09090b;">daily - Feb 3, 2026 23:00</div>
<div style="position:absolute;left:600px;top:651px;width:74px;height:20px;box-sizing:border-box;background:#f0fdf4;border:1px solid #dcfce7;border-radius:6px"></div>
<div class="t" style="left:605px;top:655px;font-size:12.36px;line-height:12px;font-weight:normal;color:#008236;letter-spacing:0.220px;transform:scaleX(1.06);-webkit-text-stroke:0.2px #008236;">Completed</div>
<div class="t" style="left:692px;top:654px;font-size:14.42px;line-height:14px;font-weight:normal;color:#09090b;letter-spacing:0.093px;transform:scaleX(1.06);-webkit-text-stroke:0.2px #09090b;">83.74 MB</div>
<div class="t" style="left:787px;top:654px;font-size:14.42px;line-height:14px;font-weight:normal;color:#09090b;letter-spacing:0.396px;transform:scaleX(1.06);-webkit-text-stroke:0.2px #09090b;">daily</div>
<div class="t" style="left:910px;top:654px;font-size:14.42px;line-height:14px;font-weight:normal;color:#71717b;letter-spacing:0.189px;transform:scaleX(1.06);-webkit-text-stroke:0.2px #71717b;">Feb 3, 2026 23:00</div>
<div class="t" style="left:1071px;top:654px;font-size:14.42px;line-height:14px;font-weight:normal;color:#71717b;letter-spacing:0.062px;transform:scaleX(1.06);-webkit-text-stroke:0.2px #71717b;">-9 sec</div>
<svg style="position:absolute;left:1168.5px;top:652px" width="17" height="17" viewBox="0 0 24 24" fill="none" stroke="#c2570c" stroke-width="1.5" stroke-linecap="round" stroke-linejoin="round"><path d="M16.023 9.348h4.992v-.001M2.985 19.644v-4.992m0 0h4.992m-4.993 0 3.181 3.183a8.25 8.25 0 0 0 13.803-3.7M4.031 9.865a8.25 8.25 0 0 1 13.803-3.7l3.181 3.182m0-4.991v4.99"/></svg>
<div class="t" style="left:1189px;top:654px;font-size:14.42px;line-height:14px;font-weight:normal;color:#c2570c;letter-spacing:-0.053px;transform:scaleX(1.06);-webkit-text-stroke:0.2px #c2570c;">Restore</div>
<svg style="position:absolute;left:1253.5px;top:653px" width="16" height="16" viewBox="0 0 24 24" fill="none" stroke="#e7000b" stroke-width="1.5" stroke-linecap="round" stroke-linejoin="round"><path d="m14.74 9-.346 9m-4.788 0L9.26 9m9.968-3.21c.342.052.682.107 1.022.166m-1.022-.165L18.16 19.673a2.25 2.25 0 0 1-2.244 2.077H8.084a2.25 2.25 0 0 1-2.244-2.077L4.772 5.79m14.456 0a48.108 48.108 0 0 0-3.478-.397m-12 .562c.34-.059.68-.114 1.022-.165m0 0a48.11 48.11 0 0 1 3.478-.397m7.5 0v-.916c0-1.18-.91-2.164-2.09-2.201a51.964 51.964 0 0 0-3.32 0c-1.18.037-2.09 1.022-2.09 2.201v.916m7.5 0a48.667 48.667 0 0 0-7.5 0"/></svg>
<div class="t" style="left:1274px;top:654px;font-size:14.42px;line-height:14px;font-weight:normal;color:#e7000b;letter-spacing:0.286px;transform:scaleX(1.06);-webkit-text-stroke:0.2px #e7000b;">Delete</div>
<div style="position:absolute;left:376px;top:690px;width:968px;height:57px;box-sizing:border-box;background:#fff;border-bottom:1px solid #e4e4e7"></div>
<div class="t" style="left:400px;top:711px;font-size:14.42px;line-height:14px;font-weight:normal;color:#09090b;letter-spacing:0.221px;transform:scaleX(1.06);-webkit-text-stroke:0.2px #09090b;">daily - Feb 3, 2026 22:00</div>
<div style="position:absolute;left:600px;top:708px;width:74px;height:20px;box-sizing:border-box;background:#f0fdf4;border:1px solid #dcfce7;border-radius:6px"></div>
<div class="t" style="left:605px;top:712px;font-size:12.36px;line-height:12px;font-weight:normal;color:#008236;letter-spacing:0.220px;transform:scaleX(1.06);-webkit-text-stroke:0.2px #008236;">Completed</div>
<div class="t" style="left:692px;top:711px;font-size:14.42px;line-height:14px;font-weight:normal;color:#09090b;letter-spacing:0.093px;transform:scaleX(1.06);-webkit-text-stroke:0.2px #09090b;">83.74 MB</div>
<div class="t" style="left:787px;top:711px;font-size:14.42px;line-height:14px;font-weight:normal;color:#09090b;letter-spacing:0.396px;transform:scaleX(1.06);-webkit-text-stroke:0.2px #09090b;">daily</div>
<div class="t" style="left:910px;top:711px;font-size:14.42px;line-height:14px;font-weight:normal;color:#71717b;letter-spacing:0.189px;transform:scaleX(1.06);-webkit-text-stroke:0.2px #71717b;">Feb 3, 2026 22:00</div>
<div class="t" style="left:1071px;top:711px;font-size:14.42px;line-height:14px;font-weight:normal;color:#71717b;letter-spacing:0.062px;transform:scaleX(1.06);-webkit-text-stroke:0.2px #71717b;">-9 sec</div>
<svg style="position:absolute;left:1168.5px;top:709px" width="17" height="17" viewBox="0 0 24 24" fill="none" stroke="#c2570c" stroke-width="1.5" stroke-linecap="round" stroke-linejoin="round"><path d="M16.023 9.348h4.992v-.001M2.985 19.644v-4.992m0 0h4.992m-4.993 0 3.181 3.183a8.25 8.25 0 0 0 13.803-3.7M4.031 9.865a8.25 8.25 0 0 1 13.803-3.7l3.181 3.182m0-4.991v4.99"/></svg>
<div class="t" style="left:1189px;top:711px;font-size:14.42px;line-height:14px;font-weight:normal;color:#c2570c;letter-spacing:-0.053px;transform:scaleX(1.06);-webkit-text-stroke:0.2px #c2570c;">Restore</div>
<svg style="position:absolute;left:1253.5px;top:710px" width="16" height="16" viewBox="0 0 24 24" fill="none" stroke="#e7000b" stroke-width="1.5" stroke-linecap="round" stroke-linejoin="round"><path d="m14.74 9-.346 9m-4.788 0L9.26 9m9.968-3.21c.342.052.682.107 1.022.166m-1.022-.165L18.16 19.673a2.25 2.25 0 0 1-2.244 2.077H8.084a2.25 2.25 0 0 1-2.244-2.077L4.772 5.79m14.456 0a48.108 48.108 0 0 0-3.478-.397m-12 .562c.34-.059.68-.114 1.022-.165m0 0a48.11 48.11 0 0 1 3.478-.397m7.5 0v-.916c0-1.18-.91-2.164-2.09-2.201a51.964 51.964 0 0 0-3.32 0c-1.18.037-2.09 1.022-2.09 2.201v.916m7.5 0a48.667 48.667 0 0 0-7.5 0"/></svg>
<div class="t" style="left:1274px;top:711px;font-size:14.42px;line-height:14px;font-weight:normal;color:#e7000b;letter-spacing:0.286px;transform:scaleX(1.06);-webkit-text-stroke:0.2px #e7000b;">Delete</div>
<div style="position:absolute;left:376px;top:747px;width:968px;height:57px;box-sizing:border-box;background:#fafafa;border-bottom:1px solid #e4e4e7"></div>
<div class="t" style="left:400px;top:768px;font-size:14.42px;line-height:14px;font-weight:normal;color:#09090b;letter-spacing:0.221px;transform:scaleX(1.06);-webkit-text-stroke:0.2px #09090b;">daily - Feb 3, 2026 21:00</div>
<div style="position:absolute;left:600px;top:765px;width:74px;height:20px;box-sizing:border-box;background:#f0fdf4;border:1px solid #dcfce7;border-radius:6px"></div>
<div class="t" style="left:605px;top:769px;font-size:12.36px;line-height:12px;font-weight:normal;color:#008236;letter-spacing:0.220px;transform:scaleX(1.06);-webkit-text-stroke:0.2px #008236;">Completed</div>
<div class="t" style="left:692px;top:768px;font-size:14.42px;line-height:14px;font-weight:normal;color:#09090b;letter-spacing:0.093px;transform:scaleX(1.06);-webkit-text-stroke:0.2px #09090b;">83.74 MB</div>
<div class="t" style="left:787px;top:768px;font-size:14.42px;line-height:14px;font-weight:normal;color:#09090b;letter-spacing:0.396px;transform:scaleX(1.06);-webkit-text-stroke:0.2px #09090b;">daily</div>
<div class="t" style="left:910px;top:768px;font-size:14.42px;line-height:14px;font-weight:normal;color:#71717b;letter-spacing:0.189px;transform:scaleX(1.06);-webkit-text-stroke:0.2px #71717b;">Feb 3, 2026 21:00</div>
<div class="t" style="left:1071px;top:768px;font-size:14.42px;line-height:14px;font-weight:normal;color:#71717b;letter-spacing:0.108px;transform:scaleX(1.06);-webkit-text-stroke:0.2px #71717b;">-10 sec</div>
<svg style="position:absolute;left:1168.5px;top:766px" width="17" height="17" viewBox="0 0 24 24" fill="none" stroke="#c2570c" stroke-width="1.5" stroke-linecap="round" stroke-linejoin="round"><path d="M16.023 9.348h4.992v-.001M2.985 19.644v-4.992m0 0h4.992m-4.993 0 3.181 3.183a8.25 8.25 0 0 0 13.803-3.7M4.031 9.865a8.25 8.25 0 0 1 13.803-3.7l3.181 3.182m0-4.991v4.99"/></svg>
<div class="t" style="left:1189px;top:768px;font-size:14.42px;line-height:14px;font-weight:normal;color:#c2570c;letter-spacing:-0.053px;transform:scaleX(1.06);-webkit-text-stroke:0.2px #c2570c;">Restore</div>
<svg style="position:absolute;left:1253.5px;top:767px" width="16" height="16" viewBox="0 0 24 24" fill="none" stroke="#e7000b" stroke-width="1.5" stroke-linecap="round" stroke-linejoin="round"><path d="m14.74 9-.346 9m-4.788 0L9.26 9m9.968-3.21c.342.052.682.107 1.022.166m-1.022-.165L18.16 19.673a2.25 2.25 0 0 1-2.244 2.077H8.084a2.25 2.25 0 0 1-2.244-2.077L4.772 5.79m14.456 0a48.108 48.108 0 0 0-3.478-.397m-12 .562c.34-.059.68-.114 1.022-.165m0 0a48.11 48.11 0 0 1 3.478-.397m7.5 0v-.916c0-1.18-.91-2.164-2.09-2.201a51.964 51.964 0 0 0-3.32 0c-1.18.037-2.09 1.022-2.09 2.201v.916m7.5 0a48.667 48.667 0 0 0-7.5 0"/></svg>
<div class="t" style="left:1274px;top:768px;font-size:14.42px;line-height:14px;font-weight:normal;color:#e7000b;letter-spacing:0.286px;transform:scaleX(1.06);-webkit-text-stroke:0.2px #e7000b;">Delete</div>
<div style="position:absolute;left:376px;top:804px;width:968px;height:57px;box-sizing:border-box;background:#fff;border-bottom:1px solid #e4e4e7"></div>
<div class="t" style="left:400px;top:825px;font-size:14.42px;line-height:14px;font-weight:normal;color:#09090b;letter-spacing:0.221px;transform:scaleX(1.06);-webkit-text-stroke:0.2px #09090b;">daily - Feb 3, 2026 20:00</div>
<div style="position:absolute;left:600px;top:822px;width:74px;height:20px;box-sizing:border-box;background:#f0fdf4;border:1px solid #dcfce7;border-radius:6px"></div>
<div class="t" style="left:605px;top:826px;font-size:12.36px;line-height:12px;font-weight:normal;color:#008236;letter-spacing:0.220px;transform:scaleX(1.06);-webkit-text-stroke:0.2px #008236;">Completed</div>
<div class="t" style="left:692px;top:825px;font-size:14.42px;line-height:14px;font-weight:normal;color:#09090b;letter-spacing:0.093px;transform:scaleX(1.06);-webkit-text-stroke:0.2px #09090b;">83.74 MB</div>
<div class="t" style="left:787px;top:825px;font-size:14.42px;line-height:14px;font-weight:normal;color:#09090b;letter-spacing:0.396px;transform:scaleX(1.06);-webkit-text-stroke:0.2px #09090b;">daily</div>
<div class="t" style="left:910px;top:825px;font-size:14.42px;line-height:14px;font-weight:normal;color:#71717b;letter-spacing:0.189px;transform:scaleX(1.06);-webkit-text-stroke:0.2px #71717b;">Feb 3, 2026 20:00</div>
<div class="t" style="left:1071px;top:825px;font-size:14.42px;line-height:14px;font-weight:normal;color:#71717b;letter-spacing:0.108px;transform:scaleX(1.06);-webkit-text-stroke:0.2px #71717b;">-10 sec</div>
<svg style="position:absolute;left:1168.5px;top:823px" width="17" height="17" viewBox="0 0 24 24" fill="none" stroke="#c2570c" stroke-width="1.5" stroke-linecap="round" stroke-linejoin="round"><path d="M16.023 9.348h4.992v-.001M2.985 19.644v-4.992m0 0h4.992m-4.993 0 3.181 3.183a8.25 8.25 0 0 0 13.803-3.7M4.031 9.865a8.25 8.25 0 0 1 13.803-3.7l3.181 3.182m0-4.991v4.99"/></svg>
<div class="t" style="left:1189px;top:825px;font-size:14.42px;line-height:14px;font-weight:normal;color:#c2570c;letter-spacing:-0.053px;transform:scaleX(1.06);-webkit-text-stroke:0.2px #c2570c;">Restore</div>
<svg style="position:absolute;left:1253.5px;top:824px" width="16" height="16" viewBox="0 0 24 24" fill="none" stroke="#e7000b" stroke-width="1.5" stroke-linecap="round" stroke-linejoin="round"><path d="m14.74 9-.346 9m-4.788 0L9.26 9m9.968-3.21c.342.052.682.107 1.022.166m-1.022-.165L18.16 19.673a2.25 2.25 0 0 1-2.244 2.077H8.084a2.25 2.25 0 0 1-2.244-2.077L4.772 5.79m14.456 0a48.108 48.108 0 0 0-3.478-.397m-12 .562c.34-.059.68-.114 1.022-.165m0 0a48.11 48.11 0 0 1 3.478-.397m7.5 0v-.916c0-1.18-.91-2.164-2.09-2.201a51.964 51.964 0 0 0-3.32 0c-1.18.037-2.09 1.022-2.09 2.201v.916m7.5 0a48.667 48.667 0 0 0-7.5 0"/></svg>
<div class="t" style="left:1274px;top:825px;font-size:14.42px;line-height:14px;font-weight:normal;color:#e7000b;letter-spacing:0.286px;transform:scaleX(1.06);-webkit-text-stroke:0.2px #e7000b;">Delete</div>
<div class="t" style="left:400px;top:884px;font-size:14.42px;line-height:14px;font-weight:normal;color:#3f3f46;letter-spacing:0.251px;transform:scaleX(1.06);-webkit-text-stroke:0.2px #3f3f46;">Showing 1 to 7 of 7 results</div>
<div style="position:absolute;left:786px;top:872px;width:149px;height:40px;box-sizing:border-box;background:#fff;border:1px solid #e4e4e7;border-radius:8px"></div>
<div style="position:absolute;left:871px;top:873px;width:1px;height:40px;background:#e4e4e7"></div>
<div class="t" style="left:798px;top:884px;font-size:14.42px;line-height:14px;font-weight:normal;color:#71717b;letter-spacing:-0.035px;transform:scaleX(1.06);-webkit-text-stroke:0.2px #71717b;">Per page</div>
<div class="t" style="left:885px;top:884px;font-size:14.42px;line-height:14px;font-weight:normal;color:#09090b;letter-spacing:0.384px;transform:scaleX(1.06);-webkit-text-stroke:0.2px #09090b;">10</div>
<svg style="position:absolute;left:909px;top:884px" width="14" height="14" viewBox="0 0 24 24" fill="none" stroke="#71717b" stroke-width="2" stroke-linecap="round" stroke-linejoin="round"><path d="m19.5 8.25-7.5 7.5-7.5-7.5"/></svg>
</body></html>
